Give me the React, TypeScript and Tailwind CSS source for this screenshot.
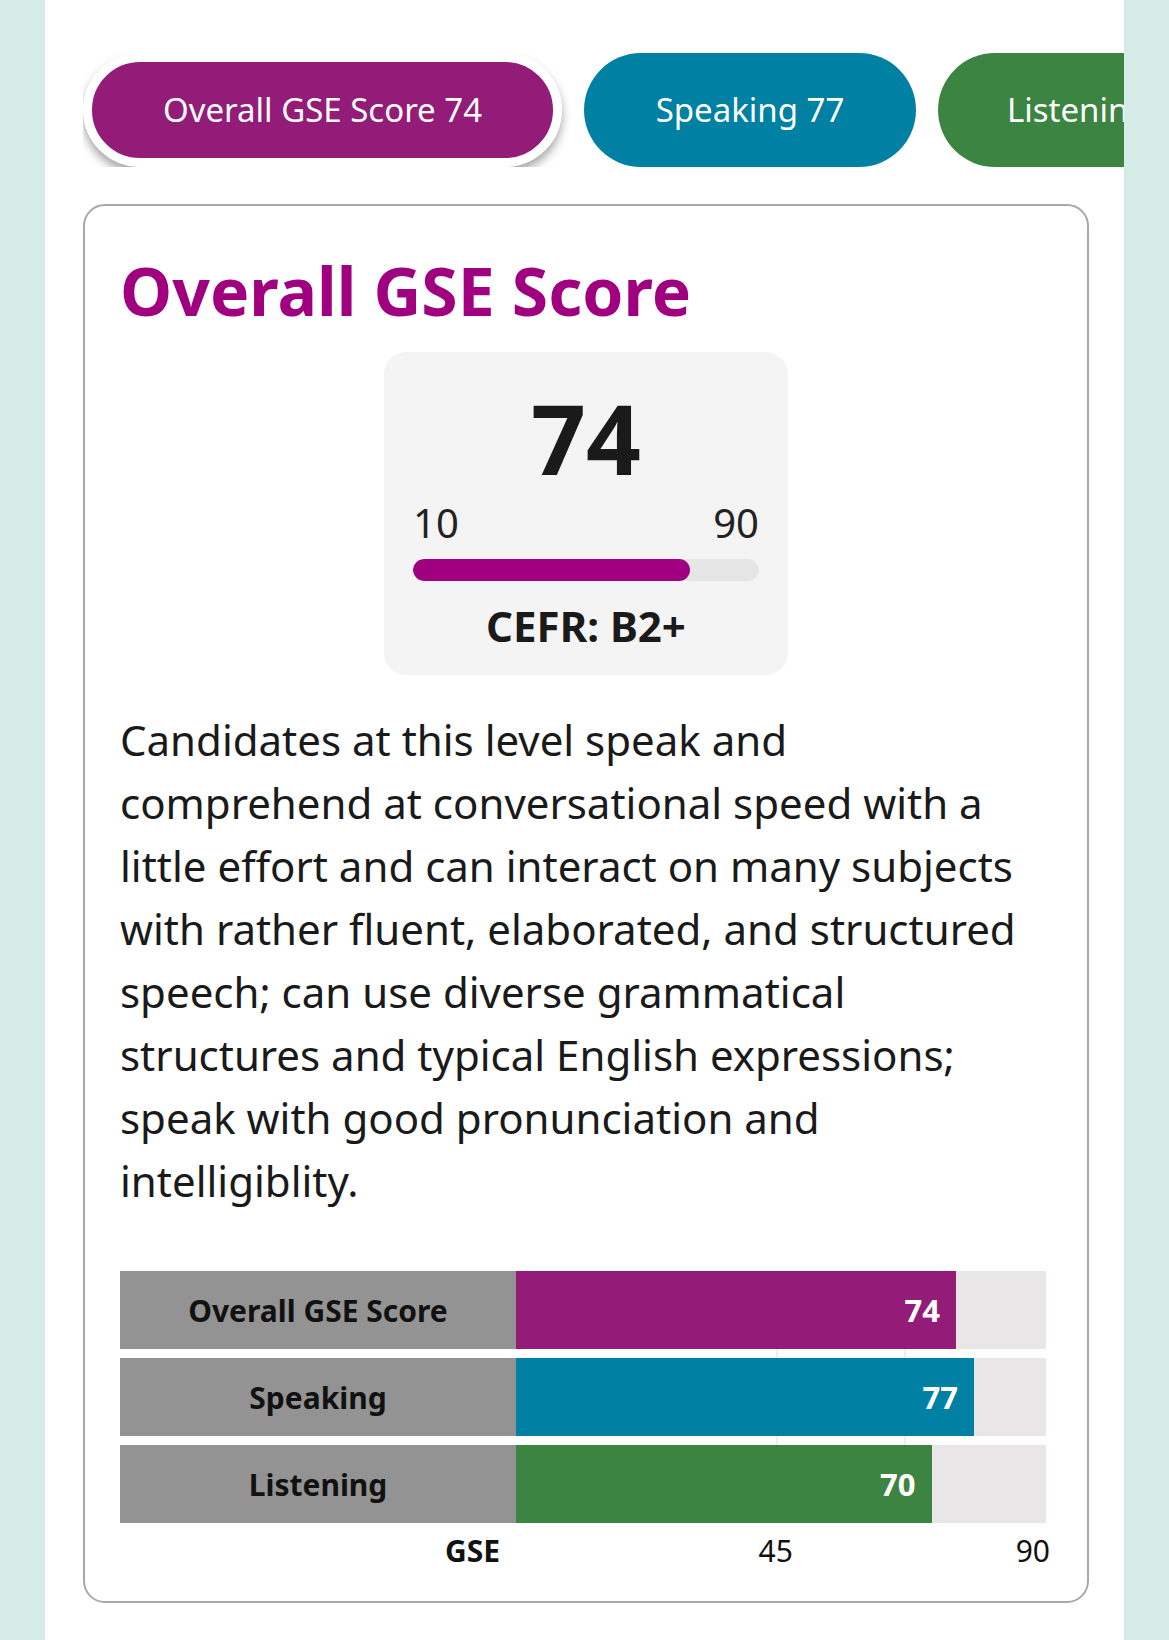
import React from "react"

const font = { fontFamily: '"Noto Sans", "Open Sans", sans-serif' }

interface Row {
  label: string
  value: number
  width: number // share of the bar area, percent
  color: string
}

const rows: Row[] = [
  { label: "Overall GSE Score", value: 74, width: 83, color: "bg-[#931c79]" },
  { label: "Speaking", value: 77, width: 86.4, color: "bg-[#0080a3]" },
  { label: "Listening", value: 70, width: 78.4, color: "bg-[#3b8441]" },
]

function Tabs() {
  return (
    <div className="flex gap-[22px] -mr-[35px] overflow-hidden">
      <div className="shrink-0 h-[114px] w-[479px] rounded-full border-[9px] border-white bg-[#931c79] shadow-[0_6px_10px_rgba(0,0,0,0.35)] flex items-center justify-center">
        <span className="text-white text-[33px]">Overall GSE Score 74</span>
      </div>
      <div className="shrink-0 h-[114px] w-[332px] rounded-full bg-[#0080a3] flex items-center justify-center">
        <span className="text-white text-[33px]">Speaking 77</span>
      </div>
      <div className="shrink-0 h-[114px] w-[326px] rounded-full bg-[#3b8441] flex items-center justify-center">
        <span className="text-white text-[33px] whitespace-nowrap">Listening 70</span>
      </div>
    </div>
  )
}

function ScoreBox() {
  const pct = ((74 - 10) / 80) * 100
  return (
    <div className="mx-auto mt-[22px] w-[404px] h-[323px] rounded-[22px] bg-[#f4f4f4] px-[29px] pt-[38px] flex flex-col text-[#1a1a1a]">
      <div className="text-center font-bold text-[96px] leading-[96px]">74</div>
      <div className="mt-[13px] flex justify-between text-[40px] leading-[48px] text-[#222]">
        <span>10</span>
        <span>90</span>
      </div>
      <div className="mt-[12px] h-[22px] rounded-full bg-[#e6e6e6] overflow-hidden">
        <div className="h-full rounded-full bg-[#a0007f]" style={{ width: `${pct}%` }} />
      </div>
      <div className="mt-[20px] text-center font-bold text-[42px] leading-[50px]">CEFR: B2+</div>
    </div>
  )
}

function Chart() {
  return (
    <div className="mt-[59px] mr-[6px]">
      <div className="relative flex flex-col gap-[9px]">
        {/* grid lines behind the bars */}
        <div className="absolute top-0 bottom-0 left-[396px] right-0">
          <div className="absolute top-0 bottom-0 left-[49%] w-[2px] bg-[#efefef]" />
          <div className="absolute top-0 bottom-0 left-[73.3%] w-[2px] bg-[#efefef]" />
        </div>
        {rows.map(r => (
          <div key={r.label} className="relative flex h-[78px]">
            <div className="w-[396px] shrink-0 bg-[#939393] flex items-center justify-center">
              <span className="font-bold text-[30px] text-[#111]">{r.label}</span>
            </div>
            <div className="flex-1 bg-[#e8e6e7] flex">
              <div className={`${r.color} h-full flex items-center justify-end pr-[16px]`} style={{ width: `${r.width}%` }}>
                <span className="font-bold text-[31px] text-white">{r.value}</span>
              </div>
            </div>
          </div>
        ))}
      </div>
      <div className="mt-[10px] flex text-[30px] leading-[36px] text-[#111]">
        <div className="w-[396px] shrink-0 flex justify-end pr-[16px] font-bold">GSE</div>
        <div className="flex-1 relative h-[36px]">
          <span className="absolute left-[49%] -translate-x-1/2">45</span>
          <span className="absolute -right-[4px]">90</span>
        </div>
      </div>
    </div>
  )
}

export default function App() {
  return (
    <div className="min-h-screen bg-[#d5ebe5] flex justify-center" style={font}>
      <div className="w-[1079px] min-h-[1640px] bg-white pl-[38px] pr-[35px] pt-[53px] overflow-hidden">
        <Tabs />
        <div className="mt-[37px] rounded-[22px] border-2 border-[#a8a8a8] px-[35px] pt-[44px] pb-[32px]">
          <h1 className="font-bold text-[66px] leading-[80px] text-[#a0007f]">Overall GSE Score</h1>
          <ScoreBox />
          <p className="mt-[33px] mr-[7px] text-[42px] leading-[63px] text-[#1a1a1a]">
            Candidates at this level speak and comprehend at conversational speed with a little effort and can
            interact on many subjects with rather fluent, elaborated, and structured speech; can use diverse
            grammatical structures and typical English expressions; speak with good pronunciation and
            intelligiblity.
          </p>
          <Chart />
        </div>
      </div>
    </div>
  )
}
